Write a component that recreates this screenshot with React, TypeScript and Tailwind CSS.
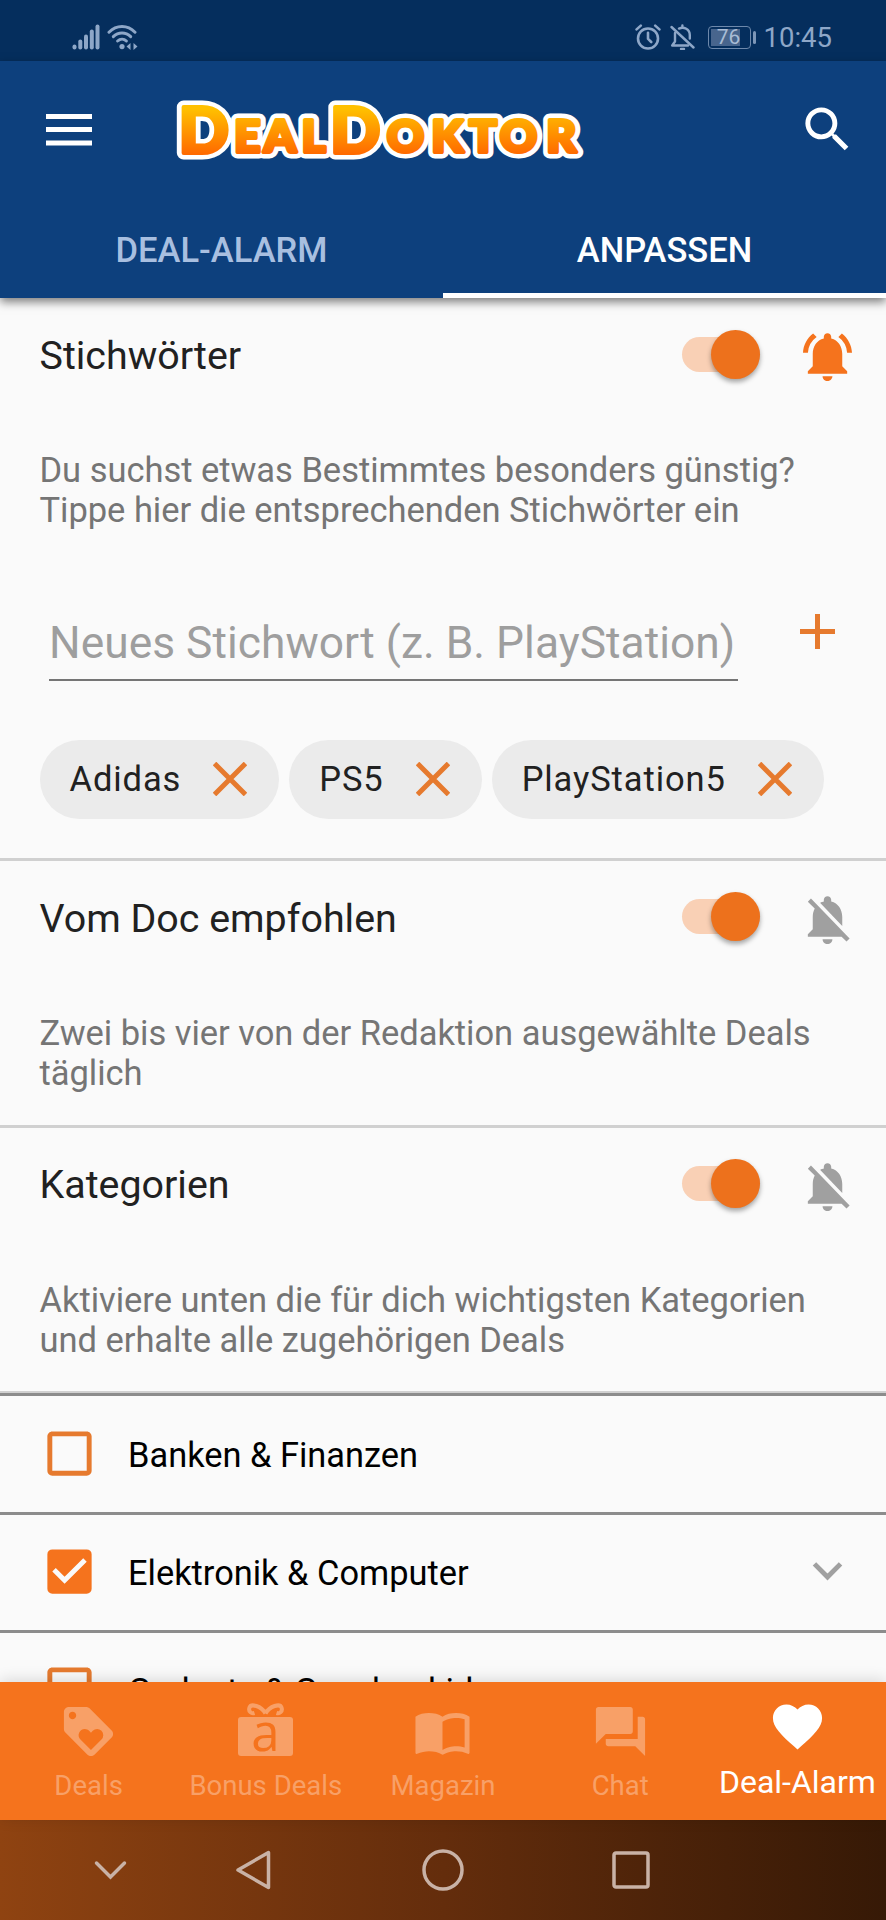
import { useState } from 'react';
import type { ReactNode } from 'react';
import {
  MdCheckBox,
  MdCheckBoxOutlineBlank,
  MdFavorite,
  MdForum,
  MdImportContacts,
  MdLoyalty,
  MdNotificationsActive,
  MdNotificationsOff,
  MdSearch,
} from 'react-icons/md';

const categoryNames = ['Banken & Finanzen', 'Elektronik & Computer', 'Gadgets & Geschenkideen'];

function StatusBar() {
  return (
    <div className="flex h-[61px] shrink-0 items-center justify-between bg-[#052e5d] pl-[72px] pr-[54px] pt-[13px] text-[#8ea7c8]">
      <div className="flex items-center gap-[7px]">
        <svg width="28" height="26" viewBox="0 0 28 26" fill="currentColor">
          <rect x="0.5" y="20.5" width="4" height="5" rx="2" />
          <rect x="6.3" y="15.5" width="4" height="10" rx="2" />
          <rect x="12" y="10.5" width="4" height="15" rx="2" />
          <rect x="17.8" y="5.5" width="4" height="20" rx="2" />
          <rect x="23.5" y="0.5" width="4" height="25" rx="2" />
        </svg>
        <svg width="32" height="26" viewBox="0 0 32 26" fill="none" stroke="currentColor" strokeWidth="3" strokeLinecap="round">
          <path d="M2 8.2C9.5 0.6 20.5 0.6 28 8.2" />
          <path d="M6.3 12.6c5-4.9 12.4-4.9 17.4 0" />
          <path d="M10.6 17c2.6-2.4 6.3-2.4 8.8 0" />
          <circle cx="15" cy="22.6" r="2.6" fill="currentColor" stroke="none" />
          <path d="M19.5 22.5l4-3.5v7zM30.5 22.5l-4-3.5v7z" fill="currentColor" stroke="none" />
        </svg>
      </div>

      <div className="flex items-center">
        <svg width="26" height="26" viewBox="0 0 26 26" fill="none" stroke="currentColor" strokeWidth="2.6" strokeLinecap="round">
          <circle cx="13" cy="14.5" r="10" />
          <path d="M13 8.8v6l3.2 3.2M1.6 5.4L5.8 1.6M24.4 5.4L20.2 1.6" />
        </svg>
        <svg className="ml-[9px]" width="25" height="26" viewBox="0 0 25 26" fill="none" stroke="currentColor" strokeWidth="2.4" strokeLinecap="round" strokeLinejoin="round">
          <path d="M1.5 3L23.5 23.5" />
          <path d="M5 9v8.5L2.2 21.5H18M9 4.6C14 2.2 19.8 5.5 19.8 11v3.5M12.4 3V1.4M11 25h3" />
        </svg>
        <div className="ml-[13px] flex h-[23px] w-[43px] items-center rounded-[4px] border-[1.5px] border-[#6d88ab] p-[2px]">
          <div className="flex h-full w-[29px] items-center justify-center bg-[#48658d] pl-[7px] text-[21px] leading-none text-[#a9bcd5]">76</div>
        </div>
        <div className="ml-[2px] h-[13px] w-[3px] rounded-sm bg-[#7d96b7]" />
        <span className="ml-[8px] pt-px text-[27.5px] leading-none">10:45</span>
      </div>
    </div>
  );
}

function Logo() {
  // capitals are set larger than the small caps, every letter has its own x
  const letters = (
    <>
      <tspan fontSize="62" x="6.3">D</tspan>
      <tspan fontSize="43" x="58.8 86.7 122.3">EAL</tspan>
      <tspan fontSize="62" x="149.3">D</tspan>
      <tspan fontSize="43" x="202.8 244.9 280.4 309.4 353.2">OKTOR</tspan>
    </>
  );
  return (
    <svg className="overflow-visible" width="414" height="70" viewBox="0 0 414 70" fontFamily="Lato" fontWeight="900" strokeLinejoin="round">
      <defs>
        <linearGradient id="logoFill" gradientUnits="userSpaceOnUse" x1="0" y1="14" x2="0" y2="59">
          <stop offset="0" stopColor="#ffc000" />
          <stop offset="1" stopColor="#ff6a00" />
        </linearGradient>
      </defs>
      <g transform="scale(1.06 1)">
        <text y="57.5" fill="#fff" stroke="#fff" strokeWidth="13">{letters}</text>
        <text y="57.5" fill="url(#logoFill)" stroke="url(#logoFill)" strokeWidth="4">{letters}</text>
      </g>
    </svg>
  );
}

function Toggle({ on, onClick }: { on: boolean; onClick: () => void }) {
  return (
    <button
      type="button"
      onClick={onClick}
      className={`flex h-[35px] w-[78px] items-center rounded-full ${on ? 'justify-end bg-[#f9d0b5]' : 'bg-gray-300'}`}
    >
      <span className={`h-[49px] w-[49px] shrink-0 rounded-full shadow-[0_3px_5px_rgba(0,0,0,0.35)] ${on ? 'bg-[#ed711c]' : 'bg-gray-50'}`} />
    </button>
  );
}

function Section({ title, text, notify, children }: { title: string; text: string; notify: boolean; children?: ReactNode }) {
  const [on, setOn] = useState(true);
  const [bell, setBell] = useState(notify);

  return (
    <section className="border-b-[3px] border-[#d0d0d0]">
      <div className="flex h-[112px] items-center pl-[39.5px] pr-[29px]">
        <h2 className="flex-1 pt-[3px] text-[39.4px] leading-none text-[#212121]">{title}</h2>
        <Toggle on={on} onClick={() => setOn(!on)} />
        <button type="button" onClick={() => setBell(!bell)} className="ml-[38px] pt-[5px]">
          {bell ? <MdNotificationsActive className="text-[59px] text-[#f5731d]" /> : <MdNotificationsOff className="text-[59px] text-[#a0a0a0]" />}
        </button>
      </div>
      <p className="mt-[40px] whitespace-pre-line pb-[31px] pl-[39.5px] text-[34.5px] leading-[40.4px] tracking-[-0.03px] text-[#757575]">{text}</p>
      {children}
    </section>
  );
}

function Keywords() {
  const [keywords, setKeywords] = useState(['Adidas', 'PS5', 'PlayStation5']);
  const [value, setValue] = useState('');

  const addKeyword = () => {
    if (!value.trim()) return;
    setKeywords([...keywords, value.trim()]);
    setValue('');
  };

  return (
    <>
      <div className="flex items-start pl-[49px] pt-[46px]">
        <input
          value={value}
          onChange={(e) => setValue(e.target.value)}
          placeholder="Neues Stichwort (z. B. PlayStation)"
          className="h-[73px] w-[689px] border-b-2 border-[#757575] text-[44.3px] tracking-[0.04px] outline-none placeholder:text-[#9e9e9e]"
        />
        <button type="button" onClick={addKeyword} className="ml-[62px] mt-[6px] text-[#e67a2e]">
          <svg width="35" height="35" viewBox="0 0 35 35" stroke="currentColor" strokeWidth="5">
            <path d="M17.5 0v35M0 17.5h35" />
          </svg>
        </button>
      </div>
      <div className="flex gap-[10px] pb-[39px] pl-[39.5px] pt-[59px]">
        {keywords.map((word) => (
          <div key={word} className="flex h-[79px] items-center rounded-full bg-[#ebebeb] pl-[30px] pr-[32px] text-[34.5px] tracking-[0.9px] text-[#212121]">
            <span className="pt-[2px]">{word}</span>
            <button type="button" onClick={() => setKeywords(keywords.filter((k) => k !== word))} className="ml-[32px] text-[#e67a2e]">
              <svg width="34" height="34" viewBox="0 0 34 34" stroke="currentColor" strokeWidth="5">
                <path d="M1.5 1.5l31 31M32.5 1.5l-31 31" />
              </svg>
            </button>
          </div>
        ))}
      </div>
    </>
  );
}

function Categories() {
  const [checked, setChecked] = useState<string[]>(['Elektronik & Computer']);

  const toggle = (name: string) => {
    setChecked(checked.includes(name) ? checked.filter((c) => c !== name) : [...checked, name]);
  };

  return (
    <div className="-mt-px">
      {categoryNames.map((name) => (
        <div key={name} onClick={() => toggle(name)} className="flex h-[118.2px] items-center border-t-[3px] border-[#8c8c8c] pb-px pl-[39.5px] pr-[29px]">
          {checked.includes(name) ? (
            <MdCheckBox className="shrink-0 text-[59px] text-[#f5731d]" />
          ) : (
            <MdCheckBoxOutlineBlank className="shrink-0 text-[59px] text-[#e67a2e]" />
          )}
          <span className="ml-[29.5px] flex-1 whitespace-nowrap pt-[3px] text-[34.4px] leading-[42px] text-black">{name}</span>
          {name === 'Elektronik & Computer' && (
            <svg width="59" height="59" viewBox="0 0 24 24" fill="none" stroke="#a0a0a0" strokeWidth="2">
              <path d="M6.7 8.9l5.3 5.3 5.3-5.3" />
            </svg>
          )}
        </div>
      ))}
    </div>
  );
}

function GiftIcon() {
  return (
    <svg width="59" height="59" viewBox="0 0 59 59" fill="none">
      <path d="M29.5 11.5C25 3.5 15 1.5 13.5 5.5c-1.5 4 2 6.500 5 5.5M29.5 11.5C34 3.5 44 1.5 45.5 5.5c1.5 4-2 6.500-5 5.5" stroke="currentColor" strokeWidth="4" />
      <rect x="2" y="15" width="55" height="39" rx="3" fill="currentColor" />
      <text x="29.5" y="49" textAnchor="middle" fontFamily="Open Sans" fontSize="51" fill="#f5731d">a</text>
    </svg>
  );
}

function BottomNav() {
  const items = [
    { label: 'Deals', icon: <MdLoyalty size={59} /> },
    { label: 'Bonus Deals', icon: <GiftIcon /> },
    { label: 'Magazin', icon: <MdImportContacts size={59} /> },
    { label: 'Chat', icon: <MdForum size={59} /> },
  ];
  return (
    <nav className="relative grid h-[138px] shrink-0 grid-cols-5 bg-[#f5731d] shadow-[0_-2px_14px_rgba(0,0,0,0.14)]">
      {items.map((item) => (
        <div key={item.label} className="flex flex-col items-center whitespace-nowrap pt-[20px] text-[#f8a067]">
          {item.icon}
          <span className="mt-[9px] text-[27.5px] leading-[32px]">{item.label}</span>
        </div>
      ))}
      <div className="flex flex-col items-center whitespace-nowrap pt-[15px] text-white">
        <MdFavorite size={59} />
        <span className="mt-[8px] text-[32px] leading-[36px]">Deal-Alarm</span>
      </div>
    </nav>
  );
}

function SystemNav() {
  return (
    <div className="flex h-[100px] shrink-0 items-center bg-linear-to-r from-[#8f4311] via-[#642d0c] to-[#361906] pl-[94px] text-[#c9b2a6]">
      <svg width="33" height="20" viewBox="0 0 33 20" fill="none" stroke="currentColor" strokeWidth="3.5" strokeLinecap="round">
        <path d="M2.5 3l14 14 14-14" />
      </svg>
      <svg className="ml-[108px]" width="37" height="42" viewBox="0 0 37 42" fill="none" stroke="currentColor" strokeWidth="3.5" strokeLinejoin="round">
        <path d="M33.5 3.5v35L3 21z" />
      </svg>
      <svg className="ml-[150px]" width="42" height="42" viewBox="0 0 42 42" fill="none" stroke="currentColor" strokeWidth="3.5">
        <circle cx="21" cy="21" r="19" />
      </svg>
      <svg className="ml-[148px]" width="38" height="38" viewBox="0 0 38 38" fill="none" stroke="currentColor" strokeWidth="3.5">
        <rect x="2" y="2" width="34" height="34" rx="2" />
      </svg>
    </div>
  );
}

export default function App() {
  return (
    <div className="flex h-[1920px] w-[886px] flex-col overflow-hidden bg-[#fafafa] font-[Roboto,sans-serif]">
      <StatusBar />

      {/* App bar */}
      <header className="relative h-[237px] shrink-0 bg-[#0d407d] shadow-[0_4px_9px_rgba(0,0,0,0.5)]">
        <div className="flex h-[137px] items-center pl-[46px] pr-[29px]">
          <svg width="46" height="32" viewBox="0 0 46 32" fill="#fff">
            <path d="M0 0h46v5H0zM0 13h46v5H0zM0 26.5h46v5H0z" />
          </svg>
          <div className="ml-[80px]">
            <Logo />
          </div>
          <MdSearch className="ml-auto text-[59px] text-white" />
        </div>
        <div className="grid grid-cols-2 text-center text-[34.5px] font-medium">
          <div className="flex h-[100px] items-center justify-center pt-[6px] text-[#a8bfe0]">DEAL-ALARM</div>
          <div className="flex h-[100px] items-center justify-center border-b-[5px] border-white pt-[11px] text-white">ANPASSEN</div>
        </div>
      </header>

      <main className="flex-1 overflow-hidden">
        <Section title="Stichwörter" text={'Du suchst etwas Bestimmtes besonders günstig?\nTippe hier die entsprechenden Stichwörter ein'} notify>
          <Keywords />
        </Section>
        <Section title="Vom Doc empfohlen" text={'Zwei bis vier von der Redaktion ausgewählte Deals\ntäglich'} notify={false} />
        <Section title="Kategorien" text={'Aktiviere unten die für dich wichtigsten Kategorien\nund erhalte alle zugehörigen Deals'} notify={false} />
        <Categories />
      </main>

      <BottomNav />
      <SystemNav />
    </div>
  );
}
